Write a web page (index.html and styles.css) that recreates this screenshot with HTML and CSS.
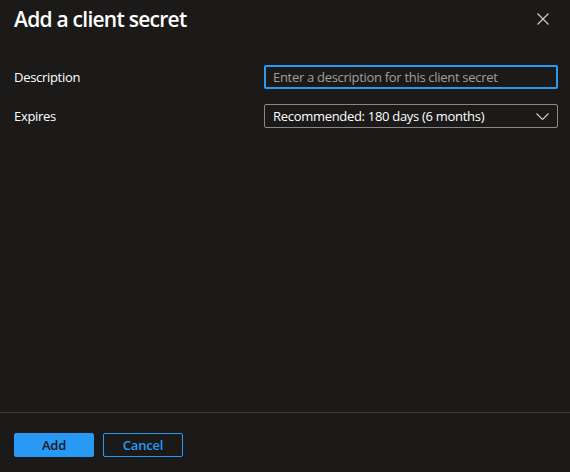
FILE: index.html
```html
<!DOCTYPE html>
<html>
<head>
<meta charset="utf-8">
<link rel="stylesheet" href="styles.css">
</head>
<body>
<div class="panel">
  <header class="head">
    <h1 class="title">Add a client secret</h1>
    <button class="close" aria-label="Close">
      <svg width="12" height="12" viewBox="0 0 12 12"><path d="M0.5 0.5 L11.5 11.5 M11.5 0.5 L0.5 11.5" stroke="#d2d0ce" stroke-width="1.1" fill="none"/></svg>
    </button>
  </header>
  <main class="form">
    <div class="row">
      <label class="label">Description</label>
      <div class="field input focus"><span class="placeholder">Enter a description for this client secret</span></div>
    </div>
    <div class="row">
      <label class="label">Expires</label>
      <div class="field select">
        <span class="value">Recommended: 180 days (6 months)</span>
        <svg class="chev" width="13" height="7" viewBox="0 0 13 7"><path d="M0.5 0.5 L6.5 6.5 L12.5 0.5" stroke="#d2d0ce" stroke-width="1.1" fill="none"/></svg>
      </div>
    </div>
  </main>
  <footer class="foot">
    <button class="btn primary">Add</button>
    <button class="btn secondary">Cancel</button>
  </footer>
</div>
</body>
</html>
```
FILE: styles.css
```css
* { box-sizing: border-box; }
html, body { margin: 0; padding: 0; }
body {
  background: #1b1a19;
  color: #ffffff;
  font-family: "Open Sans", "Noto Sans", "Liberation Sans", sans-serif;
  width: 570px;
  height: 472px;
  overflow: hidden;
}
.panel {
  display: flex;
  flex-direction: column;
  height: 472px;
}
.head {
  display: flex;
  align-items: flex-start;
  justify-content: space-between;
  padding: 4px 21px 0 14px;
  height: 54px;
}
.title {
  margin: 0;
  font-size: 21px;
  font-weight: 600;
  line-height: 30px;
  letter-spacing: -0.75px;
}
.close {
  background: none;
  border: 0;
  padding: 0;
  margin-top: 9px;
  width: 12px;
  height: 12px;
  display: flex;
}
.form {
  flex: 1;
  display: flex;
  flex-direction: column;
  gap: 15px;
  padding: 11px 12px 0 14px;
}
.row {
  display: flex;
  align-items: center;
  height: 24px;
}
.label {
  width: 250px;
  font-size: 13px;
  letter-spacing: -0.3px;
  color: #ffffff;
}
.field {
  flex: 1;
  height: 24px;
  display: flex;
  align-items: center;
  font-size: 13px;
  letter-spacing: -0.3px;
  border: 1px solid #8a8886;
  border-radius: 2px;
  padding: 0 8px;
}
.input.focus {
  border: 2px solid #2899f5;
  padding: 0 7px;
}
.placeholder { color: #a19f9d; }
.select {
  justify-content: space-between;
  padding-right: 8px;
}
.value { color: #ffffff; }
.foot {
  border-top: 1px solid #3b3a39;
  height: 60px;
  display: flex;
  gap: 9px;
  padding: 20px 14px 0 14px;
}
.btn {
  width: 80px;
  height: 24px;
  border-radius: 2px;
  font-family: inherit;
  font-size: 13px;
  font-weight: 600;
  letter-spacing: -0.2px;
  padding: 0;
}
.primary {
  background: #2899f5;
  border: 1px solid #2899f5;
  color: #1b1a19;
}
.secondary {
  background: transparent;
  border: 1px solid #2899f5;
  color: #2899f5;
}
```
